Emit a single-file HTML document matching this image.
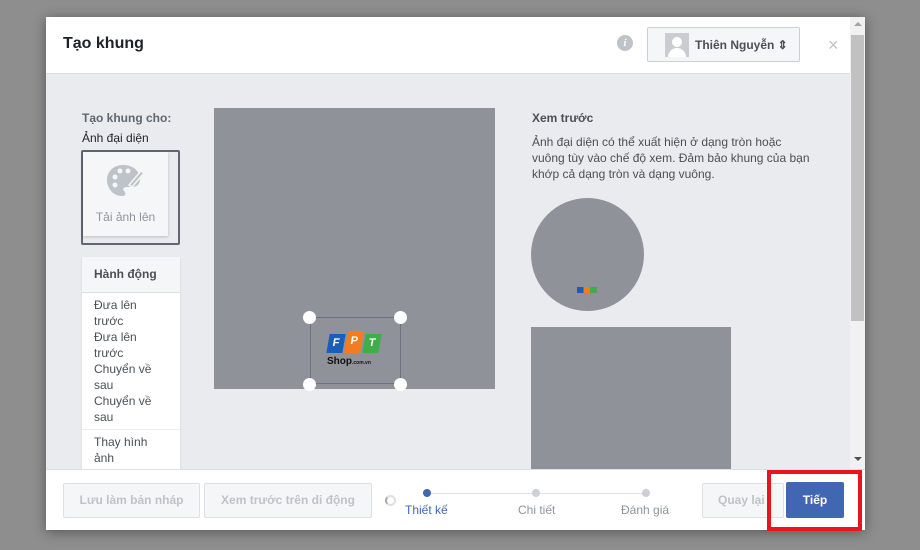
<!DOCTYPE html>
<html><head><meta charset="utf-8"><style>
*{box-sizing:border-box;margin:0;padding:0}
body{width:920px;height:550px;background:#8e8e8e;font-family:"Liberation Sans",Arial,sans-serif;position:relative;overflow:hidden}
.modal{position:absolute;left:46px;top:17px;width:819px;height:513px;background:#fff;box-shadow:0 2px 12px rgba(0,0,0,.4)}
.hdr{position:absolute;left:0;top:0;width:804px;height:57px;border-bottom:1px solid #dddfe2;background:#fff}
.hdr h1{position:absolute;left:17px;top:18px;font-size:16px;font-weight:bold;color:#1d2129}
.body{position:absolute;left:0;top:57px;width:804px;height:395px;background:#e9ebee;overflow:hidden}
.sb{position:absolute;left:804px;top:0;width:15px;height:452px;background:#f1f1f1}
.foot{position:absolute;left:0;top:452px;width:819px;height:61px;background:#fff;border-top:1px solid #dddfe2}
.btn{position:absolute;height:35px;border:1px solid #dddfe2;background:#f5f6f7;color:#bec3c9;font-size:12px;font-weight:bold;text-align:center;line-height:33px;border-radius:2px}
.grey{background:#8f9299}
.small{font-size:12px;color:#4b4f56}
</style></head><body>
<div class="modal">
 <div class="hdr"><h1>Tạo khung</h1>
  <div style="position:absolute;left:571px;top:18px;width:16px;height:16px;border-radius:50%;background:#bec3c9;color:#fff;font-size:11px;font-weight:bold;font-style:italic;text-align:center;line-height:16px;font-family:'Liberation Serif',serif">i</div>
  <div style="position:absolute;left:601px;top:10px;width:153px;height:35px;border:1px solid #ccd0d5;background:#f5f6f7;border-radius:2px">
   <div style="position:absolute;left:17px;top:5px;width:24px;height:24px;background:#c9ccd1"><div style="position:absolute;left:7px;top:4px;width:10px;height:10px;border-radius:50%;background:#fff"></div><div style="position:absolute;left:3px;top:15px;width:18px;height:9px;border-radius:9px 9px 0 0;background:#fff"></div></div>
   <div style="position:absolute;left:47px;top:10px;font-size:12px;font-weight:bold;color:#4b4f56">Thiên Nguyễn ⇕</div>
  </div>
  <div style="position:absolute;left:782px;top:18px;font-size:18px;color:#bec3c9">×</div>
 </div>
 <div class="body">
  <div style="position:absolute;left:36px;top:37px;font-size:12px;font-weight:bold;color:#606770">Tạo khung cho:</div>
  <div style="position:absolute;left:36px;top:57px;font-size:12px;color:#1d2129">Ảnh đại diện</div>
  <div style="position:absolute;left:35px;top:76px;width:99px;height:95px;border:2px solid #606770;border-radius:2px">
   <div style="position:absolute;left:0;top:0;width:85px;height:84px;background:#f5f6f7;box-shadow:0 1px 3px rgba(0,0,0,.2)">
    <svg style="position:absolute;left:22px;top:11px" width="42" height="36" viewBox="0 0 42 36"><path d="M18 2C8 2 2 9 2 17s6 16 15 16c4 0 4-3 2-5s0-4 3-4h5c5 0 8-3 8-8C35 8 28 2 18 2z" fill="#bec3c9"/><circle cx="10" cy="14" r="2.5" fill="#f5f6f7"/><circle cx="15" cy="8" r="2.5" fill="#f5f6f7"/><circle cx="23" cy="8" r="2.5" fill="#f5f6f7"/><circle cx="10" cy="22" r="2.5" fill="#f5f6f7"/><path d="M24 22l12-14 3 2-12 14z" fill="#bec3c9" stroke="#f5f6f7" stroke-width="1.5"/></svg>
    <div style="position:absolute;left:0;width:85px;top:58px;text-align:center;font-size:12px;color:#90949c">Tải ảnh lên</div>
   </div>
  </div>
  <div style="position:absolute;left:36px;top:183px;width:98px;height:220px;background:#fff;box-shadow:0 1px 2px rgba(0,0,0,.1)">
   <div style="height:36px;background:#f5f6f7;border-bottom:1px solid #dddfe2;padding:10px 12px;font-size:12px;font-weight:bold;color:#4b4f56">Hành động</div>
   <div style="padding:4px 12px;font-size:12px;line-height:16px;color:#4b4f56;border-bottom:1px solid #e9ebee">Đưa lên<br>trước<br>Đưa lên<br>trước<br>Chuyển về<br>sau<br>Chuyển về<br>sau</div>
   <div style="padding:4px 12px;font-size:12px;line-height:16px;color:#4b4f56">Thay hình<br>ảnh</div>
  </div>
  <div class="grey" style="position:absolute;left:168px;top:34px;width:281px;height:281px"></div>
  <div style="position:absolute;left:264px;top:243px;width:91px;height:67px;border:1px solid #6f727a"></div>
  <div style="position:absolute;left:257px;top:237px;width:13px;height:13px;border-radius:50%;background:#fff"></div>
  <div style="position:absolute;left:348px;top:237px;width:13px;height:13px;border-radius:50%;background:#fff"></div>
  <div style="position:absolute;left:257px;top:304px;width:13px;height:13px;border-radius:50%;background:#fff"></div>
  <div style="position:absolute;left:348px;top:304px;width:13px;height:13px;border-radius:50%;background:#fff"></div>
  <div style="position:absolute;left:282px;top:260px;width:16px;height:19px;background:#1a5eb8;transform:skewX(-10deg);color:#fff;font-size:11px;font-weight:bold;text-align:center;line-height:19px">F</div>
  <div style="position:absolute;left:300px;top:257px;width:16px;height:22px;background:#f47b20;transform:skewX(-10deg);color:#fff;font-size:11px;font-weight:bold;text-align:center;line-height:21px">P</div>
  <div style="position:absolute;left:318px;top:260px;width:16px;height:19px;background:#3fae49;transform:skewX(-10deg);color:#fff;font-size:11px;font-weight:bold;text-align:center;line-height:19px">T</div>
  <div style="position:absolute;left:281px;top:282px;font-size:10px;font-weight:bold;color:#111">Shop<span style="font-size:5px">.com.vn</span></div>
  <div style="position:absolute;left:486px;top:37px;font-size:12px;font-weight:bold;color:#4b4f56">Xem trước</div>
  <div class="small" style="position:absolute;left:486px;top:60px;width:282px;line-height:16px">Ảnh đại diện có thể xuất hiện ở dạng tròn hoặc vuông tùy vào chế độ xem. Đảm bảo khung của bạn khớp cả dạng tròn và dạng vuông.</div>
  <div class="grey" style="position:absolute;left:485px;top:124px;width:113px;height:113px;border-radius:50%"></div>
  <div style="position:absolute;left:531px;top:213px;width:20px;height:6px;background:linear-gradient(90deg,#1a5eb8 33%,#f47b20 33% 66%,#3fae49 66%)"></div>
  <div class="grey" style="position:absolute;left:485px;top:253px;width:200px;height:150px"></div>
 </div>
 <div class="sb"><div style="position:absolute;left:1px;top:18px;width:13px;height:286px;background:#c1c1c1"></div><div style="position:absolute;left:4px;top:5px;border:4px solid transparent;border-bottom-color:#a3a3a3;border-top:0"></div><div style="position:absolute;left:4px;top:440px;border:4px solid transparent;border-top-color:#505050;border-bottom:0"></div></div>
 <div class="foot">
  <div class="btn" style="left:17px;top:13px;width:137px">Lưu làm bản nháp</div>
  <div class="btn" style="left:158px;top:13px;width:168px">Xem trước trên di động</div>
  <div style="position:absolute;left:339px;top:25px;width:11px;height:11px;border-radius:50%;border:2px solid #dddfe2;border-left-color:#aaa"></div>
  <div style="position:absolute;left:380px;top:23px;width:220px;height:1px;background:#dddfe2"></div>
  <div style="position:absolute;left:377px;top:19px;width:8px;height:8px;border-radius:50%;background:#4267b2"></div>
  <div style="position:absolute;left:486px;top:19px;width:8px;height:8px;border-radius:50%;background:#ccd0d5"></div>
  <div style="position:absolute;left:596px;top:19px;width:8px;height:8px;border-radius:50%;background:#ccd0d5"></div>
  <div style="position:absolute;left:359px;top:33px;font-size:12px;color:#4267b2">Thiết kế</div>
  <div style="position:absolute;left:472px;top:33px;font-size:12px;color:#90949c">Chi tiết</div>
  <div style="position:absolute;left:575px;top:33px;font-size:12px;color:#90949c">Đánh giá</div>
  <div class="btn" style="left:656px;top:13px;width:82px;text-align:left;padding-left:15px">Quay lại</div>
  <div style="position:absolute;left:721px;top:0;width:95px;height:61px;border:4px solid #e8141e"></div>
  <div style="position:absolute;left:740px;top:12px;width:58px;height:36px;background:#4267b2;border-radius:2px;color:#fff;font-size:12px;font-weight:bold;text-align:center;line-height:36px">Tiếp</div>
 </div>
</div>
</body></html>
